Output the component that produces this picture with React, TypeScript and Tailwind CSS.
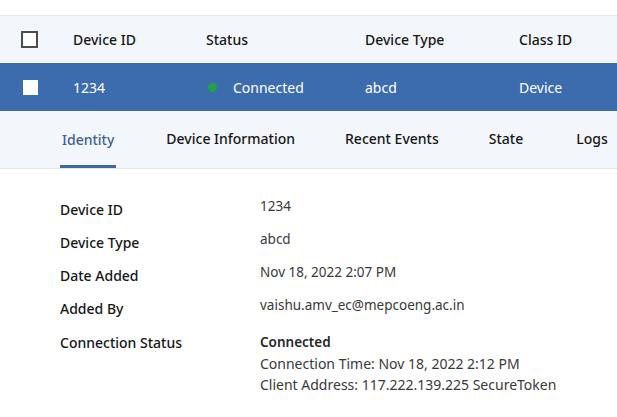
import React from 'react'

const tabs = ['Identity', 'Device Information', 'Recent Events', 'State', 'Logs']

const details = [
  { label: 'Device ID', value: '1234' },
  { label: 'Device Type', value: 'abcd' },
  { label: 'Date Added', value: 'Nov 18, 2022 2:07 PM' },
  { label: 'Added By', value: 'vaishu.amv_ec@mepcoeng.ac.in' },
]

const App = () => {
  return (
    <div className="h-[417px] w-[617px] overflow-hidden bg-white font-['Noto_Sans',sans-serif] text-[#161616]">
      <div className="h-[16px] border-b border-[#e4e8ee] bg-white" />

      {/* header row */}
      <div className="flex h-[47px] items-center bg-[#f3f6fa] text-[14px] font-medium">
        <div className="flex w-[73px] items-center pl-[21px]">
          <div className="h-[17px] w-[17px] border-2 border-[#4d4d4d] bg-white" />
        </div>
        <div className="w-[133px]">Device ID</div>
        <div className="w-[159px]">Status</div>
        <div className="w-[154px]">Device Type</div>
        <div className="flex-1 whitespace-nowrap">Class ID</div>
      </div>

      {/* selected row */}
      <div className="flex h-[48px] items-center bg-[#3d6cae] text-[14px] text-white">
        <div className="flex w-[73px] items-center pl-[23px]">
          <div className="h-[15px] w-[15px] bg-white" />
        </div>
        <div className="w-[133px]">1234</div>
        <div className="flex w-[159px] items-center">
          <span className="ml-[2px] h-[9px] w-[9px] rounded-full bg-[#24a148]" />
          <span className="ml-[16px]">Connected</span>
        </div>
        <div className="w-[154px]">abcd</div>
        <div className="flex-1">Device</div>
      </div>

      {/* tabs */}
      <div className="flex h-[58px] items-stretch gap-[50px] border-b border-[#e4e8ee] bg-[#f3f6fa] pl-[60px] text-[14px] font-medium">
        {tabs.map((t, i) => (
          <div
            key={t}
            className={
              i === 0
                ? 'flex items-center whitespace-nowrap border-b-[3px] border-[#3d6aa6] px-[2px] pt-[3px] text-[#3d5f96]'
                : i === 4
                  ? 'ml-[3px] flex items-center whitespace-nowrap pb-[3px]'
                  : 'flex items-center whitespace-nowrap pb-[3px]'
            }
          >
            {t}
          </div>
        ))}
      </div>

      {/* details */}
      <div className="flex flex-col gap-[11px] pl-[60px] pt-[28px] text-[14px]">
        {details.map((d) => (
          <div key={d.label} className="flex h-[22px] items-center">
            <div className="mt-[3px] w-[200px] font-medium">{d.label}</div>
            <div className="-mt-[3px] text-[13.5px] text-[#393939]">{d.value}</div>
          </div>
        ))}
        <div className="mt-[3px] flex">
          <div className="w-[200px] font-medium">Connection Status</div>
          <div className="flex flex-col text-[14px] leading-[21px] text-[#393939]">
            <span className="text-[13.5px] font-semibold text-[#262626]">Connected</span>
            <span>Connection Time: Nov 18, 2022 2:12 PM</span>
            <span>Client Address: 117.222.139.225 SecureToken</span>
          </div>
        </div>
      </div>
    </div>
  )
}

export default App
